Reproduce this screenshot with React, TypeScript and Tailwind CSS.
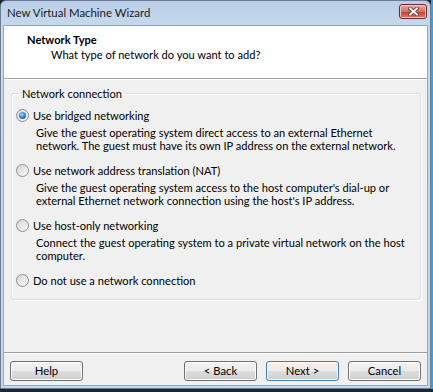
import React from 'react';

interface NetOption {
  id: string;
  label: string;
  desc: string[];
}

const OPTIONS: NetOption[] = [
  {
    id: 'bridged',
    label: 'Use bridged networking',
    desc: [
      'Give the guest operating system direct access to an external Ethernet',
      'network. The guest must have its own IP address on the external network.',
    ],
  },
  {
    id: 'nat',
    label: 'Use network address translation (NAT)',
    desc: [
      "Give the guest operating system access to the host computer's dial-up or",
      "external Ethernet network connection using the host's IP address.",
    ],
  },
  {
    id: 'hostonly',
    label: 'Use host-only networking',
    desc: ['Connect the guest operating system to a private virtual network on the host', 'computer.'],
  },
  { id: 'none', label: 'Do not use a network connection', desc: [] },
];

function Radio({ checked }: { checked: boolean }) {
  return (
    <span className="w-[13px] h-[13px] rounded-full border border-[#8f8f8f] bg-[linear-gradient(135deg,#d8d8d8,#f7f7f7)] flex items-center justify-center shrink-0">
      {checked && (
        <span className="w-[7px] h-[7px] rounded-full bg-[radial-gradient(circle_at_40%_35%,#a6dcff_0%,#3a8ad6_45%,#123f7a_100%)]" />
      )}
    </span>
  );
}

function WinButton({ label, primary = false }: { label: string; primary?: boolean }) {
  return (
    <button
      className={`w-[73px] h-[20px] rounded-[3px] border text-[11.3px] leading-none text-black flex items-center justify-center shadow-[inset_0_0_0_1px_#fcfcfc] bg-[linear-gradient(#f2f2f2_0%,#ebebeb_48%,#dddddd_52%,#cfcfcf_100%)] ${
        primary ? 'border-[#3c7fb1] shadow-[inset_0_0_0_1px_#b6e2f8]' : 'border-[#707070]'
      }`}
    >
      {label}
    </button>
  );
}

export default function App() {
  const [selected, setSelected] = React.useState('bridged');

  return (
    <div className="w-[433px] h-[392px] bg-[#1c2530] flex flex-col overflow-hidden font-['Segoe_UI','Lato',sans-serif] text-[11.1px] text-black">
      <div className="flex h-[389px]">
        {/* Window */}
        <div className="w-[431px] flex flex-col rounded-tl-[6px] rounded-tr-[6px] border border-[#6b7c90] bg-[linear-gradient(#bacfe7,#c8daee_30px,#c4d7ec)]">
          {/* Title bar */}
          <div className="h-[24px] flex items-center pl-[6px] pr-[3px] shrink-0">
            <span className="text-[11.4px] text-[#1a1a1a]">New Virtual Machine Wizard</span>
            <div className="ml-auto mt-[-4px] w-[28px] h-[15px] rounded-[3px] border border-[#6c2b27] bg-[linear-gradient(#e6aca2,#d46f62_50%,#c14737_55%,#d9786a)] flex items-center justify-center shadow-[inset_0_0_0_1px_#eec6bf]">
              <svg width="11" height="9" viewBox="0 0 11 9">
                <path d="M2 1.5 L9 7.5 M9 1.5 L2 7.5" stroke="#5a2a26" strokeWidth="3.6" strokeLinecap="square" />
                <path d="M2 1.5 L9 7.5 M9 1.5 L2 7.5" stroke="#ffffff" strokeWidth="2" strokeLinecap="square" />
              </svg>
            </div>
          </div>

          {/* Client area */}
          <div className="flex-1 mx-[2px] mb-[2px] flex flex-col bg-[#f0f0f0] border border-[#93a7bf]">
            {/* Header */}
            <div className="h-[53px] bg-white border-b border-[#a0a0a0] pt-[6px] shrink-0">
              <div className="pl-[23px] font-bold leading-[15px]">Network Type</div>
              <div className="pl-[47px] leading-[15px]">What type of network do you want to add?</div>
            </div>
            <div className="h-px bg-white shrink-0" />

            {/* Body */}
            <fieldset className="mt-[6px] ml-[7px] mr-[6px] border border-[#d5dfe5] rounded-[3px] shadow-[inset_1px_1px_0_#fff,1px_1px_0_#fff] pl-[4px] pr-[6px] pt-[8px] pb-[12px]">
              <legend className="ml-[4px] px-[2px] leading-[15px]">Network connection</legend>
              <div className="flex flex-col gap-[12px]">
                {OPTIONS.map((opt) => (
                  <div key={opt.id}>
                    <label className="flex items-center gap-[4px] h-[13px] cursor-default" onClick={() => setSelected(opt.id)}>
                      <Radio checked={selected === opt.id} />
                      <span className="leading-[13px] whitespace-nowrap">{opt.label}</span>
                    </label>
                    {opt.desc.length > 0 && (
                      <div className="pl-[20px] mt-[4px] leading-[13px] whitespace-nowrap">
                        {opt.desc.map((line, i) => (
                          <div key={i}>{line}</div>
                        ))}
                      </div>
                    )}
                  </div>
                ))}
              </div>
            </fieldset>

            <div className="flex-1" />

            {/* Footer */}
            <div className="h-px bg-[#a0a0a0]" />
            <div className="h-px bg-white" />
            <div className="flex items-center px-[6px] pt-[7px] pb-[4px]">
              <WinButton label="Help" />
              <div className="ml-auto flex gap-[9px] mr-[9px]">
                <WinButton label="< Back" />
                <WinButton label="Next >" primary />
              </div>
              <WinButton label="Cancel" />
            </div>
          </div>
        </div>
        <div className="w-[2px] bg-[#2fa4e7]" />
      </div>
    </div>
  );
}
